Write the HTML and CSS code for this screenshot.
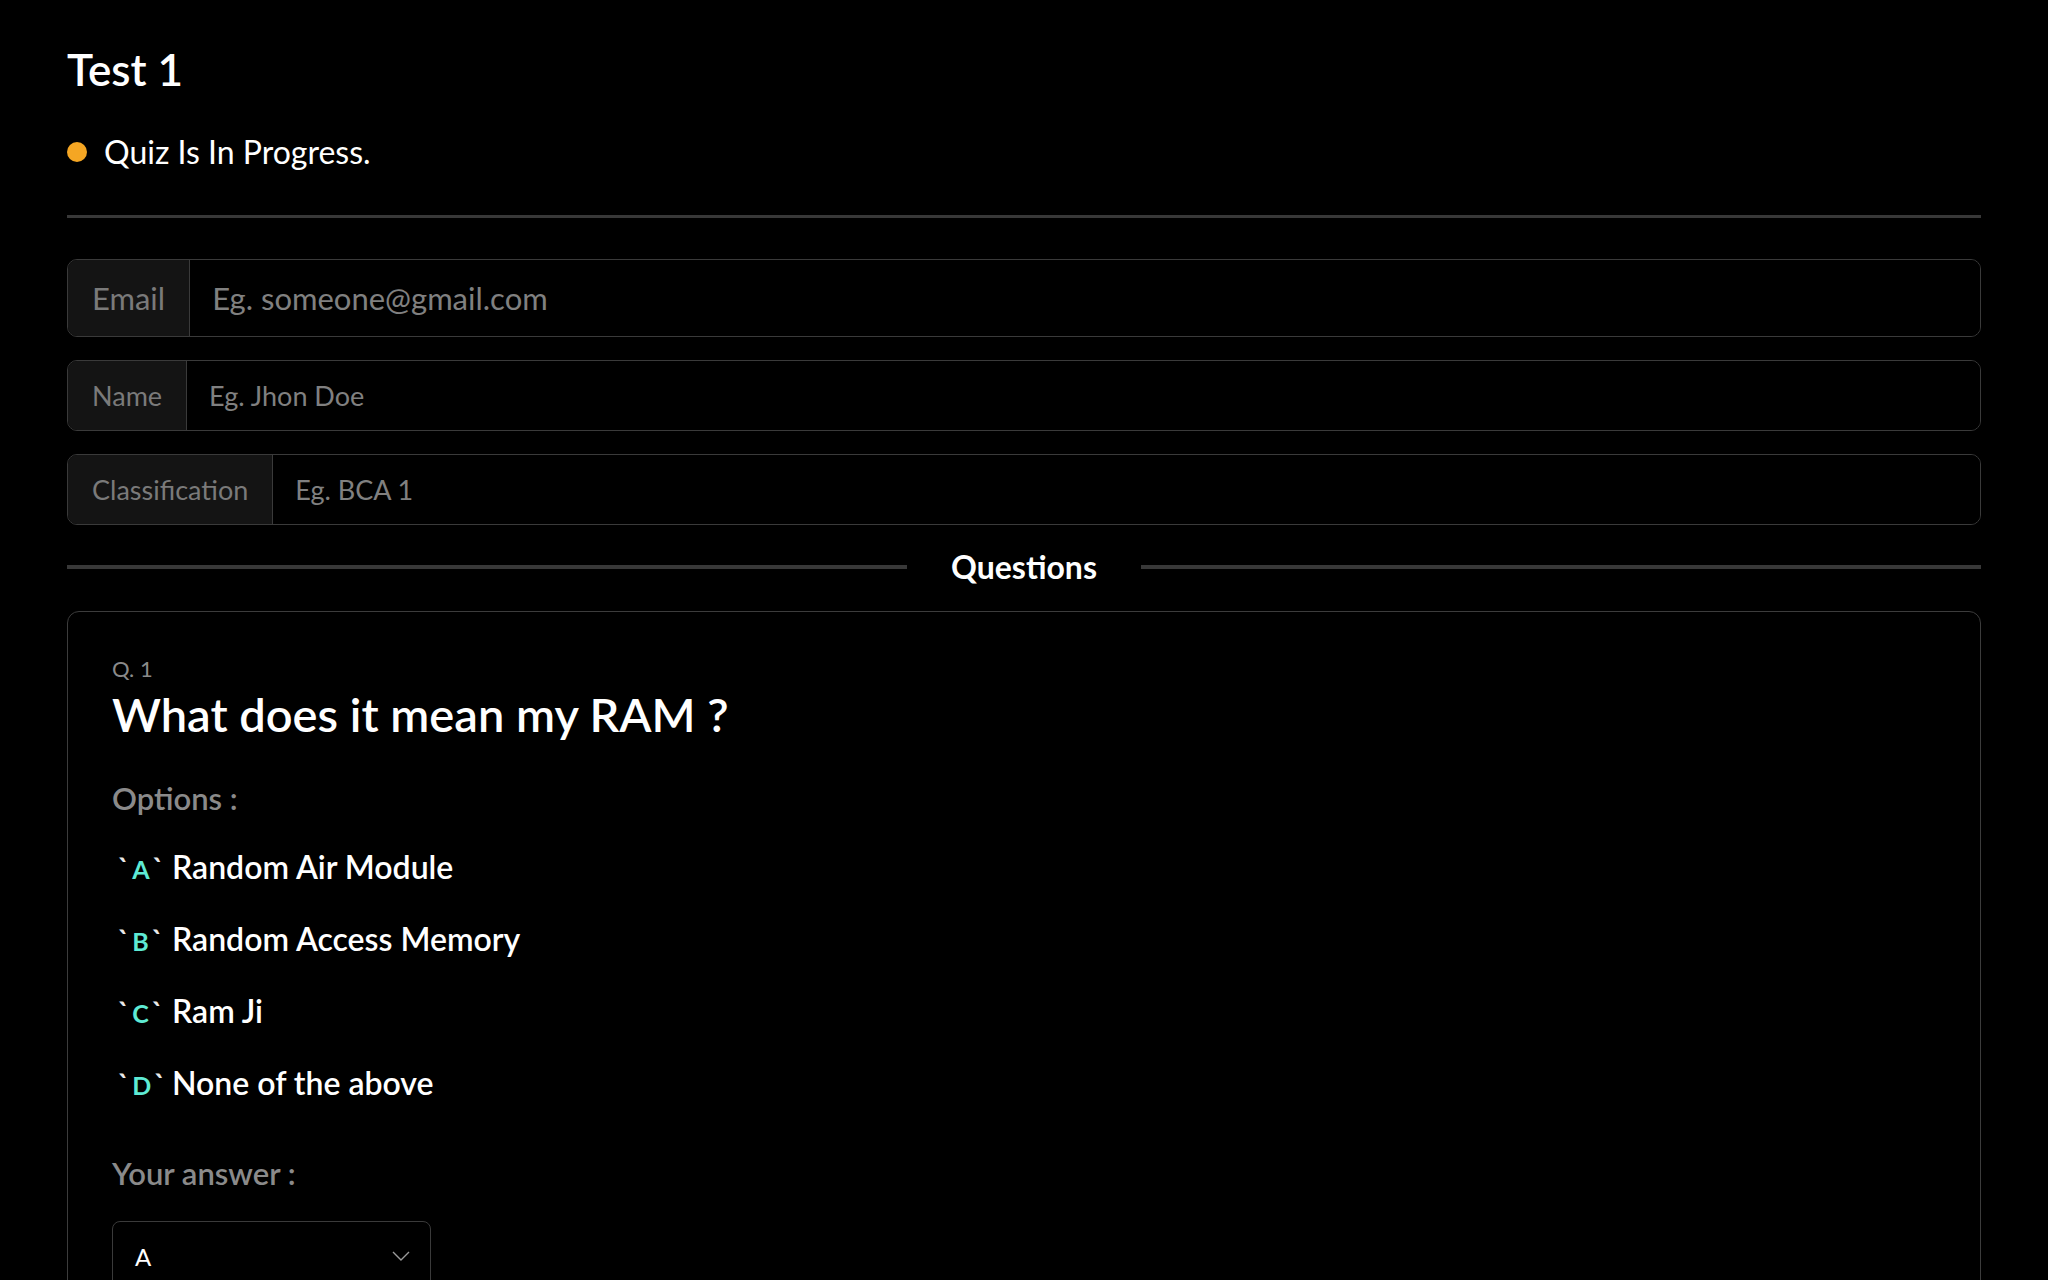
FILE: index.html
```html
<!DOCTYPE html>
<html lang="en">
<head>
<meta charset="utf-8">
<title>Test 1</title>
<link rel="stylesheet" href="styles.css">
</head>
<body>
<main class="page">
  <h1 class="title">Test 1</h1>
  <div class="status">
    <span class="dot"></span>
    <span class="status-text">Quiz Is In Progress.</span>
  </div>
  <hr class="rule">

  <div class="field field-lg">
    <span class="field-label">Email</span>
    <input class="field-input" type="text" placeholder="Eg. someone@gmail.com">
  </div>
  <div class="field">
    <span class="field-label">Name</span>
    <input class="field-input" type="text" placeholder="Eg. Jhon Doe">
  </div>
  <div class="field">
    <span class="field-label">Classification</span>
    <input class="field-input" type="text" placeholder="Eg. BCA 1">
  </div>

  <div class="divider">
    <span class="divider-line"></span>
    <span class="divider-text">Questions</span>
    <span class="divider-line"></span>
  </div>

  <section class="card">
    <div class="q-num">Q. 1</div>
    <h2 class="q-title">What does it mean my RAM ?</h2>
    <div class="sub-label">Options :</div>
    <ul class="options">
      <li class="option"><span class="key"><span class="tick">`</span><span class="letter">A</span><span class="tick">`</span></span><span class="opt-text">Random Air Module</span></li>
      <li class="option"><span class="key"><span class="tick">`</span><span class="letter">B</span><span class="tick">`</span></span><span class="opt-text">Random Access Memory</span></li>
      <li class="option"><span class="key"><span class="tick">`</span><span class="letter">C</span><span class="tick">`</span></span><span class="opt-text">Ram Ji</span></li>
      <li class="option"><span class="key"><span class="tick">`</span><span class="letter">D</span><span class="tick">`</span></span><span class="opt-text">None of the above</span></li>
    </ul>
    <div class="sub-label answer-label">Your answer :</div>
    <div class="select">
      <span class="select-value">A</span>
      <svg class="chevron" width="18" height="10" viewBox="0 0 18 10" aria-hidden="true"><path d="M1 1 L9 9 L17 1" fill="none" stroke="#9a9a9a" stroke-width="1.4"/></svg>
    </div>
  </section>
</main>
</body>
</html>
```

FILE: styles.css
```css
* { box-sizing: border-box; }

html, body {
  margin: 0;
  background: #000;
}

body {
  font-family: "Lato", "Open Sans", sans-serif;
  color: #fff;
}

.page {
  padding: 41px 67px 0;
}

.title {
  margin: 0;
  font-size: 44px;
  line-height: 56px;
  font-weight: 600;
}

.status {
  margin-top: 37px;
  display: flex;
  align-items: center;
  gap: 17px;
  height: 35px;
}

.dot {
  width: 20px;
  height: 20px;
  border-radius: 50%;
  background: #f5a623;
}

.status-text {
  font-size: 32px;
  line-height: 35px;
}

.rule {
  margin: 46px 0 0;
  border: 0;
  border-top: 3px solid #383838;
  height: 0;
}

.field {
  margin-top: 23px;
  display: flex;
  height: 71px;
  border: 1px solid #3a3a3a;
  border-radius: 10px;
  overflow: hidden;
  font-size: 27px;
}

.field-lg {
  margin-top: 41px;
  height: 78px;
  font-size: 31px;
}

.field-label {
  display: flex;
  align-items: center;
  padding: 0 24px;
  background: #141414;
  border-right: 1px solid #3a3a3a;
  color: #7a7a7a;
}

.field-input {
  flex: 1;
  min-width: 0;
  background: #000;
  border: 0;
  outline: 0;
  padding: 0 22px;
  font: inherit;
  color: #fff;
}

.field-input::placeholder {
  color: #808080;
}

.divider {
  margin-top: 25px;
  display: flex;
  align-items: center;
  gap: 44px;
}

.divider-line {
  flex: 1;
  height: 4px;
  background: #383838;
}

.divider-text {
  font-size: 32px;
  line-height: 34px;
  font-weight: 700;
}

.card {
  margin-top: 27px;
  border: 1px solid #3c3c3c;
  border-radius: 12px;
  padding: 44px 44px 80px;
}

.q-num {
  font-size: 22px;
  line-height: 26px;
  color: #8a8a8a;
}

.q-title {
  margin: 4px 0 0;
  font-size: 47px;
  line-height: 56px;
  font-weight: 600;
}

.sub-label {
  margin-top: 39px;
  font-size: 31px;
  line-height: 35px;
  font-weight: 600;
  color: #8a8a8a;
}

.options {
  list-style: none;
  margin: 33px 0 0;
  padding: 0;
  display: flex;
  flex-direction: column;
  gap: 36px;
}

.option {
  display: flex;
  align-items: baseline;
  height: 36px;
  font-size: 32px;
  line-height: 36px;
  font-weight: 600;
}

.key {
  display: inline-flex;
  align-items: baseline;
  width: 60px;
  padding-left: 6px;
  font-weight: 700;
  line-height: 1;
}

.tick {
  font-size: 28px;
  color: #e8e8e8;
}

.letter {
  font-size: 25px;
  color: #5eead4;
  margin: 0 3px;
}

.answer-label {
  margin-top: 55px;
}

.select {
  margin-top: 30px;
  width: 319px;
  height: 70px;
  border: 1px solid #3a3a3a;
  border-radius: 8px;
  display: flex;
  align-items: center;
  justify-content: space-between;
  padding: 0 20px 0 22px;
}

.select-value {
  font-size: 24px;
  color: #fff;
}

.chevron {
  display: block;
}
```
